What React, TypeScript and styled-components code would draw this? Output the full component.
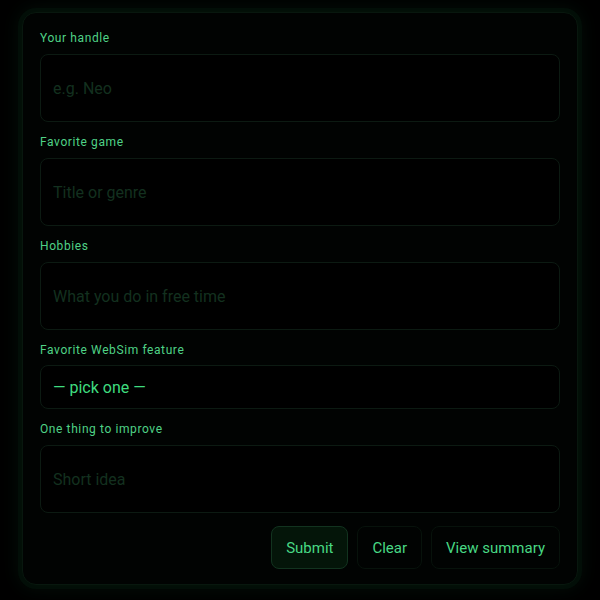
import React from 'react';
import styled, { createGlobalStyle } from 'styled-components';

const GlobalStyle = createGlobalStyle`
  html, body {
    margin: 0;
    padding: 0;
    background: #000;
    font-family: Roboto, "Noto Sans", "Liberation Sans", sans-serif;
  }
`;

const Page = styled.div`
  width: 600px;
  height: 600px;
  box-sizing: border-box;
  padding: 12px 22px 15px;
  background: #000;
  overflow: hidden;
`;

const Card = styled.form`
  display: flex;
  flex-direction: column;
  box-sizing: border-box;
  height: 100%;
  padding: 17px 17px 16px;
  border: 1px solid #08170e;
  border-radius: 14px;
  background: #010302;
  box-shadow: 0 0 0 4px rgba(8, 32, 18, 0.3), 0 0 18px 5px rgba(18, 80, 44, 0.16);
`;

const Field = styled.div`
  display: flex;
  flex-direction: column;
  gap: 8px;
  margin-bottom: 12px;
`;

const Label = styled.label`
  font-size: 12px;
  line-height: 16px;
  letter-spacing: 0.6px;
  color: #4fd286;
`;

const Input = styled.input`
  box-sizing: border-box;
  height: 68px;
  padding: 0 12px;
  border: 1px solid #0c1a12;
  border-radius: 8px;
  background: #000;
  color: #3fdc7f;
  font-family: inherit;
  font-size: 16px;
  outline: none;
  &::placeholder {
    color: #13301f;
  }
`;

const Select = styled.div`
  display: flex;
  align-items: center;
  box-sizing: border-box;
  height: 44px;
  padding: 0 12px;
  margin-top: -1px;
  border: 1px solid #0c1a12;
  border-radius: 8px;
  background: #000;
  color: #3fdc7f;
  font-size: 16px;
`;

const Actions = styled.div`
  display: flex;
  justify-content: flex-end;
  gap: 9px;
  margin-top: 1px;
`;

const Button = styled.button<{ primary?: boolean }>`
  height: 43px;
  padding: 0 14px;
  border-radius: 8px;
  border: 1px solid ${({ primary }) => (primary ? '#12331f' : '#07120b')};
  background: ${({ primary }) => (primary ? '#041509' : '#010302')};
  color: #48d884;
  font-family: inherit;
  font-size: 15px;
  cursor: pointer;
`;

const App = () => {
  return (
    <Page>
      <GlobalStyle />
      <Card onSubmit={(e) => e.preventDefault()}>
        <Field>
          <Label>Your handle</Label>
          <Input placeholder="e.g. Neo" />
        </Field>
        <Field>
          <Label>Favorite game</Label>
          <Input placeholder="Title or genre" />
        </Field>
        <Field>
          <Label>Hobbies</Label>
          <Input placeholder="What you do in free time" />
        </Field>
        <Field>
          <Label>Favorite WebSim feature</Label>
          <Select>— pick one —</Select>
        </Field>
        <Field>
          <Label>One thing to improve</Label>
          <Input placeholder="Short idea" />
        </Field>
        <Actions>
          <Button primary>Submit</Button>
          <Button type="button">Clear</Button>
          <Button type="button">View summary</Button>
        </Actions>
      </Card>
    </Page>
  );
};

export default App;
